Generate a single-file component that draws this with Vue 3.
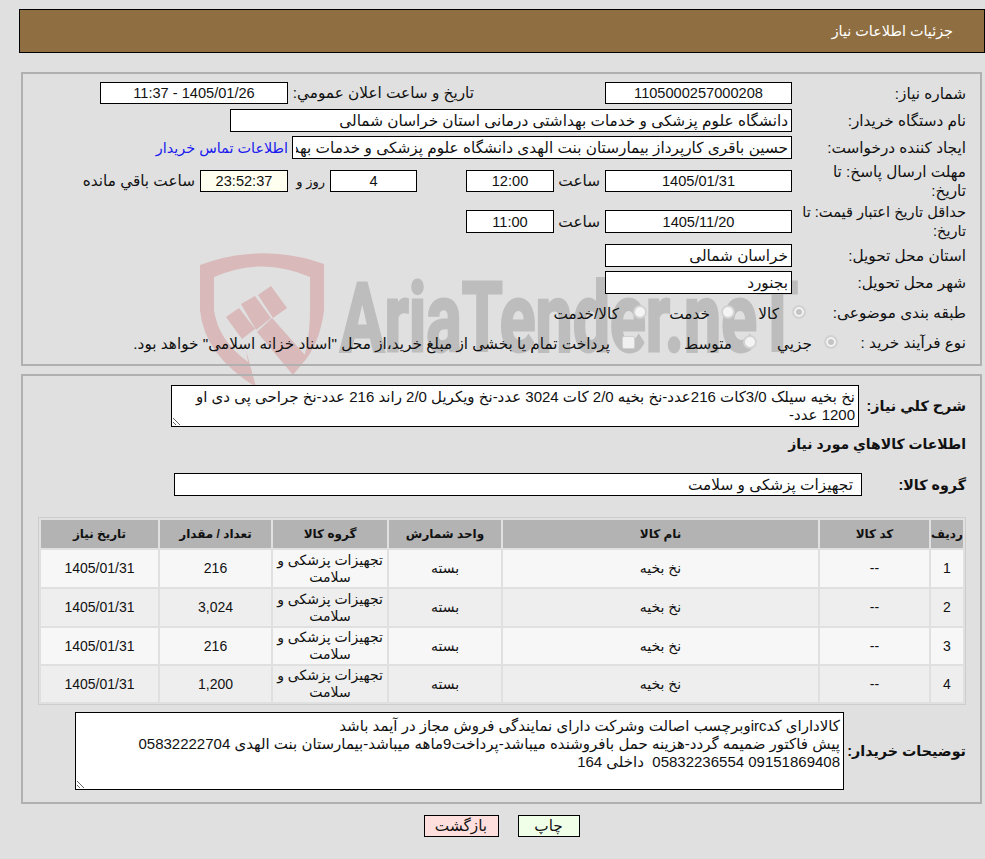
<template>
  <div class="page" dir="rtl">
    <svg class="mark" viewBox="0 0 640 150" width="640" height="150">
      <g fill="#d9b9b9">
        <path d="M10 25 Q72 2 134 24 L134 70 Q130 104 112 124 L103 135 L115 114 Q120 95 120 70 L120 37 Q72 16 24 37 L24 70 Q28 100 58 122 L56 110 L66 147 Q14 115 10 70 Z" />
        <path d="M36 77 L49 68 L65 89 L52 99 Z" />
        <path d="M51 64 L65 56 L81 78 L66 90 Z" />
        <path d="M68 55 L81 46 L97 68 L83 78 Z" />
        <path d="M82 78 L67 92 L103 135 L115 115 Z" />
      </g>
      <text class="mark-text" x="150" y="111" textLength="458" lengthAdjust="spacingAndGlyphs">AriaTender.neT</text>
    </svg>

    <header class="head">جزئیات اطلاعات نیاز</header>

    <section class="panel top-panel">
      <div class="row r1">
        <label class="lbl">شماره نیاز:</label>
        <input class="box w187 center" readonly value="1105000257000208" />
        <label class="lbl-pub">تاریخ و ساعت اعلان عمومي:</label>
        <input class="box w188 center" readonly value="1405/01/26 - 11:37" />
      </div>
      <div class="row r2">
        <label class="lbl">نام دستگاه خریدار:</label>
        <input class="box w562" readonly value="دانشگاه علوم پزشکی و خدمات بهداشتی درمانی استان خراسان شمالی" />
      </div>
      <div class="row r3">
        <label class="lbl">ایجاد کننده درخواست:</label>
        <input class="box w500" readonly value="حسین باقری کارپرداز بیمارستان بنت الهدی دانشگاه علوم پزشکی و خدمات بهداشتی درمانی" />
        <a class="link">اطلاعات تماس خریدار</a>
      </div>
      <div class="row r4">
        <label class="lbl nowrap">مهلت ارسال پاسخ: تا<br />تاریخ:</label>
        <input class="box w187 center" readonly value="1405/01/31" />
        <span class="hour">ساعت</span>
        <input class="box w88 center" readonly value="12:00" />
        <input class="box w87 center days" readonly value="4" />
        <span class="day-txt">روز و</span>
        <input class="box w88 center clock" readonly value="23:52:37" />
        <span class="left-txt">ساعت باقي مانده</span>
      </div>
      <div class="row r5">
        <label class="lbl nowrap tight">حداقل تاریخ اعتبار قیمت: تا<br />تاریخ:</label>
        <input class="box w187 center" readonly value="1405/11/20" />
        <span class="hour">ساعت</span>
        <input class="box w88 center" readonly value="11:00" />
      </div>
      <div class="row r6">
        <label class="lbl">استان محل تحویل:</label>
        <input class="box w187" readonly value="خراسان شمالی" />
      </div>
      <div class="row r7">
        <label class="lbl">شهر محل تحویل:</label>
        <input class="box w187" readonly value="بجنورد" />
      </div>
      <div class="row r8">
        <label class="lbl l160">طبقه بندی موضوعی:</label>
        <span class="radio on"></span><span class="opt o-kala">کالا</span>
        <span class="radio"></span><span class="opt o-khedmat">خدمت</span>
        <span class="radio"></span><span class="opt o-both">کالا/خدمت</span>
      </div>
      <div class="row r9">
        <label class="lbl l128">نوع فرآیند خرید :</label>
        <span class="radio on"></span><span class="opt o-jozi">جزیي</span>
        <span class="radio"></span><span class="opt o-motavaset">متوسط</span>
        <span class="check"></span>
        <span class="opt o-pay">پرداخت تمام یا بخشی از مبلغ خرید،از محل "اسناد خزانه اسلامی" خواهد بود.</span>
      </div>
    </section>

    <section class="panel items-panel">
      <div class="row desc-row">
        <label class="lbl-b w107">شرح کلي نیاز:</label>
        <textarea class="area desc" readonly>نخ بخیه سیلک 3/0کات 216عدد-نخ بخیه 2/0 کات 3024 عدد-نخ ویکریل 2/0 راند 216 عدد-نخ جراحی پی دی او 1200 عدد-</textarea>
      </div>
      <h3 class="sub">اطلاعات کالاهاي مورد نیاز</h3>
      <div class="row group-row">
        <label class="lbl-b w104">گروه کالا:</label>
        <input class="box w688 group-in" readonly value="تجهیزات پزشکی و سلامت" />
      </div>

      <table class="items">
        <colgroup>
          <col class="c1" /><col class="c2" /><col class="c3" />
          <col class="c4" /><col class="c5" /><col class="c6" /><col />
        </colgroup>
        <thead>
          <tr>
            <th>ردیف</th><th>کد کالا</th><th>نام کالا</th><th>واحد شمارش</th>
            <th>گروه کالا</th><th>تعداد / مقدار</th><th>تاریخ نیاز</th>
          </tr>
        </thead>
        <tbody>
          <tr v-for="item in items" :key="item.id">
            <td>{{ item.id }}</td>
            <td>--</td>
            <td>نخ بخیه</td>
            <td>بسته</td>
            <td class="grp">تجهیزات پزشکی و سلامت</td>
            <td>{{ item.qty }}</td>
            <td>1405/01/31</td>
          </tr>
        </tbody>
      </table>

      <div class="row note-row">
        <label class="lbl-b w122">توضیحات خریدار:</label>
        <textarea class="area note" readonly>{{ note }}</textarea>
      </div>
    </section>

    <div class="actions">
      <button class="btn print">چاپ</button>
      <button class="btn back">بازگشت</button>
    </div>
  </div>
</template>

<script setup>
const items = [
  { id: 1, qty: '216' },
  { id: 2, qty: '3,024' },
  { id: 3, qty: '216' },
  { id: 4, qty: '1,200' }
]

const note = `کالادارای کدircوبرچسب اصالت وشرکت دارای نمایندگی فروش مجاز در آیمد باشد
پیش فاکتور ضمیمه گردد-هزینه حمل بافروشنده میباشد-پرداخت9ماهه میباشد-بیمارستان بنت الهدی 05832222704 09151869408 05832236554  داخلی 164`
</script>

<style>
html, body { margin: 0; background: #e0e0e0; }
</style>

<style scoped>
.page {
  position: relative;
  width: 985px;
  height: 859px;
  overflow: hidden;
  background: #e0e0e0;
  color: #111;
  font-family: "Liberation Sans", "DejaVu Sans", sans-serif;
  font-size: 15.3px;
}
.mark { position: absolute; left: 190px; top: 240px; direction: ltr; }
.mark-text {
  font-family: Roboto, sans-serif;
  font-weight: 700;
  font-size: 96px;
  fill: #bdbdbd;
  stroke: #bdbdbd;
  stroke-width: 3px;
}

.head {
  position: relative;
  box-sizing: border-box;
  width: 966px;
  height: 44px;
  margin: 9px 0 0 19px;
  padding-right: 31px;
  border: 1px solid #000;
  background: #8f6f42;
  color: #fff;
  line-height: 42px;
  font-size: 14.4px;
}

.panel {
  position: relative;
  box-sizing: border-box;
  width: 961px;
  margin-right: 3px;
  padding: 0 14px;
  border: 2px solid #b0b0b0;
}
.top-panel { height: 294px; margin-top: 19px; padding-top: 8px; }
.items-panel { height: 430px; margin-top: 8px; padding-top: 9px; }

.row { display: flex; align-items: center; }
.r1 { height: 22px; }
.r2 { height: 23px; margin-top: 5px; }
.r3 { height: 23px; margin-top: 4px; }
.r4 { height: 22px; margin-top: 11px; }
.r5 { height: 23px; margin-top: 18px; }
.r6 { height: 23px; margin-top: 11px; }
.r7 { height: 23px; margin-top: 4px; }
.r8 { height: 24px; margin-top: 6px; }
.r9 { height: 24px; margin-top: 6px; }

.lbl { width: 174px; flex: none; line-height: 19px; box-sizing: border-box; padding-left: 5px; }
.nowrap { white-space: nowrap; }
.tight { font-size: 14.6px; }
.l160 { width: 160px; padding-left: 0; }
.l128 { width: 128px; padding-left: 0; }
.lbl-pub { margin: 0 131px 0 5px; width: 181px; flex: none; white-space: nowrap; }
.lbl-b { flex: none; font-weight: 700; font-size: 14.3px; white-space: nowrap; }
.w107 { width: 107px; }
.w104 { width: 104px; }
.w122 { width: 122px; }

.box {
  box-sizing: border-box;
  height: 100%;
  margin: 0;
  padding: 0 3px;
  border: 1px solid #000;
  background: #fff;
  color: #111;
  font: inherit;
  outline: none;
  flex: none;
}
.center { text-align: center; font-size: 14.6px; }
.w187 { width: 187px; }
.w188 { width: 188px; }
.w88 { width: 88px; }
.w87 { width: 87px; }
.w562 { width: 562px; }
.w500 { width: 500px; }
.w688 { width: 688px; }

.link { margin-right: 4px; color: #1a1aee; white-space: nowrap; font-size: 14.4px; }
.hour { width: 42px; margin: 0 5px 0 4px; flex: none; }
.days { margin-right: 49px; }
.day-txt { width: 28px; margin: 0 5px 0 9px; flex: none; white-space: nowrap; font-size: 13px; }
.clock { background: #fffff0; }
.left-txt { margin-right: 5px; white-space: nowrap; }

.radio {
  box-sizing: border-box;
  width: 14px;
  height: 14px;
  flex: none;
  border-radius: 50%;
  border: 2px solid #d2d2d2;
  background: #f4f4f4;
}
.radio.on { background: #c4c4c4; box-shadow: inset 0 0 0 2px #f4f4f4; }
.check {
  box-sizing: border-box;
  width: 13px;
  height: 13px;
  flex: none;
  border: 1px solid #d0d0d0;
  border-radius: 2px;
  background: #f0f0f0;
}
.opt { padding-top: 3px; white-space: nowrap; }
.o-kala { width: 44px; margin-right: 13px; }
.o-khedmat { width: 63px; margin-right: 11px; }
.o-both { margin-right: 14px; }
.o-jozi { width: 55px; margin-right: 12px; }
.o-motavaset { width: 97px; margin-right: 11px; }
.o-pay { margin-right: 12px; }

.area {
  display: block;
  box-sizing: border-box;
  margin: 0;
  padding: 4px 3px 2px;
  border: 1px solid #000;
  background: #fff;
  color: #111;
  font: inherit;
  font-size: 15px;
  outline: none;
  flex: none;
}
.desc { width: 688px; height: 42px; line-height: 18px; padding: 2px 3px 0; }
.note { width: 769px; height: 78px; line-height: 18px; }
.desc-row { height: 42px; }

.sub { margin: 6px 0 0; height: 22px; line-height: 22px; font-size: 14px; font-weight: 700; }
.group-row { height: 23px; margin-top: 18px; }
.group-in { padding-right: 8px; }

.items {
  box-sizing: border-box;
  width: 928px;
  margin-top: 21px;
  table-layout: fixed;
  border: 1px solid #cdcdcd;
  border-collapse: separate;
  border-spacing: 2px;
  text-align: center;
  font-size: 12px;
}
.c1 { width: 32px; }
.c2 { width: 109px; }
.c3 { width: 315px; }
.c4 { width: 112px; }
.c5 { width: 114px; }
.c6 { width: 111px; }
.items th { height: 28px; padding: 0; background: #b3b3b3; font-weight: 700; }
.items td { height: 37px; padding: 0; background: #f7f7f7; line-height: 17px; font-size: 14px; }
.items tbody tr:nth-child(even) td { background: #eeeeee; }
.items tbody tr:nth-child(n+3) td { height: 36px; }
.grp { padding: 0 4px !important; }

.note-row { margin-top: 7px; height: 78px; }

.actions { display: flex; justify-content: center; gap: 19px; width: 961px; margin: 11px 3px 0 0; }
.btn {
  box-sizing: border-box;
  height: 22px;
  padding: 0;
  border: 1px solid #000;
  color: #111;
  font: inherit;
}
.print { width: 62px; background: #efffe8; }
.back { width: 75px; background: #ffdede; }
</style>
